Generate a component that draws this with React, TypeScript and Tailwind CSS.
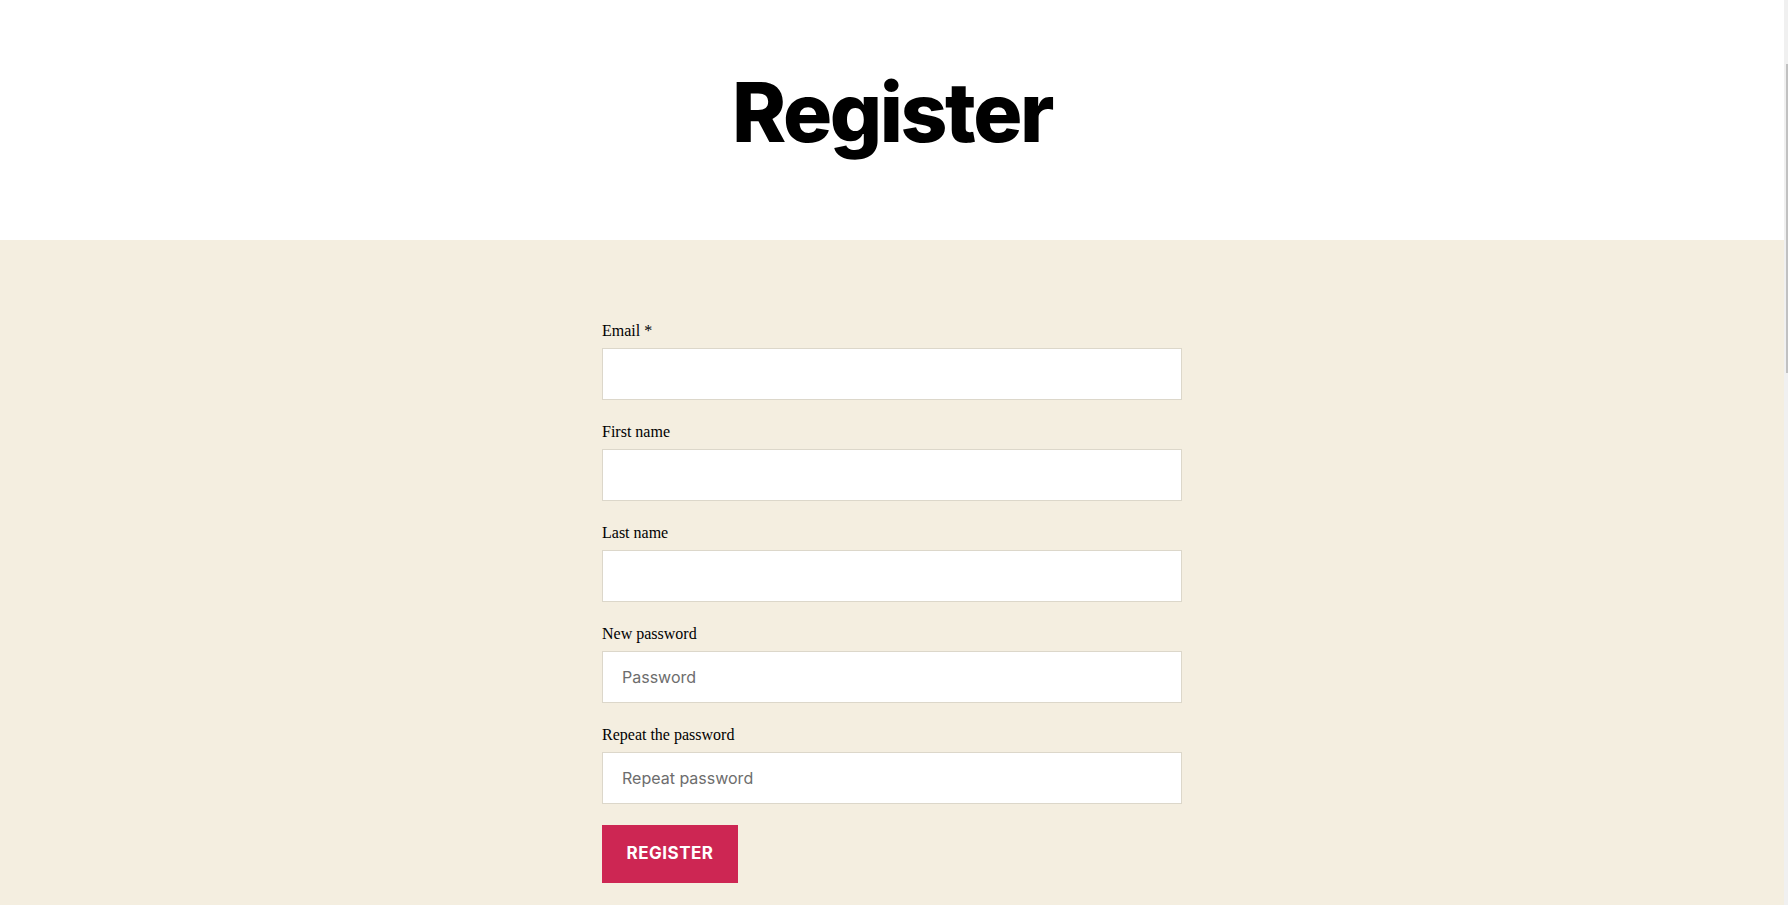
import React from "react";

type Field = {
  id: string;
  label: string;
  type: string;
  placeholder?: string;
};

const fields: Field[] = [
  { id: "email", label: "Email *", type: "email" },
  { id: "firstName", label: "First name", type: "text" },
  { id: "lastName", label: "Last name", type: "text" },
  { id: "password", label: "New password", type: "password", placeholder: "Password" },
  { id: "repeat", label: "Repeat the password", type: "password", placeholder: "Repeat password" },
];

export default function App() {
  return (
    <div className="flex min-h-[905px] w-full bg-white">
      <div className="flex-1">
        <header className="flex h-[240px] justify-center bg-white pt-[63px]">
          <h1 className="font-['Inter',sans-serif] text-[82px] font-extrabold leading-[100px] tracking-[-0.03em] text-black">
            Register
          </h1>
        </header>

        <main className="min-h-[665px] bg-[#f4eee0] pt-[79px]">
          <form className="mx-auto flex w-[580px] flex-col" onSubmit={(e) => e.preventDefault()}>
            {fields.map((f) => (
              <div key={f.id} className="mb-[20px] flex flex-col">
                <label
                  htmlFor={f.id}
                  className="mb-[5px] font-['Liberation_Serif','Times_New_Roman',serif] text-base leading-6 text-black"
                >
                  {f.label}
                </label>
                <input
                  id={f.id}
                  type={f.type}
                  placeholder={f.placeholder}
                  className="h-[52px] w-full border border-[#dcd7ca] bg-white px-[19px] font-['Inter',sans-serif] text-base text-black outline-none placeholder:text-[#6d6d6d]"
                />
              </div>
            ))}
            <div className="pt-px">
              <button
                type="submit"
                className="h-[58px] w-[136px] bg-[#cd2653] font-['Inter',sans-serif] text-[17px] font-bold tracking-[0.03em] text-white"
              >
                REGISTER
              </button>
            </div>
          </form>
        </main>
      </div>

      <aside className="w-1 shrink-0 bg-[#f0f0f0]">
        <div className="ml-[2px] mt-[64px] h-[309px] w-[2px] bg-[#c1c1c1]" />
      </aside>
    </div>
  );
}
